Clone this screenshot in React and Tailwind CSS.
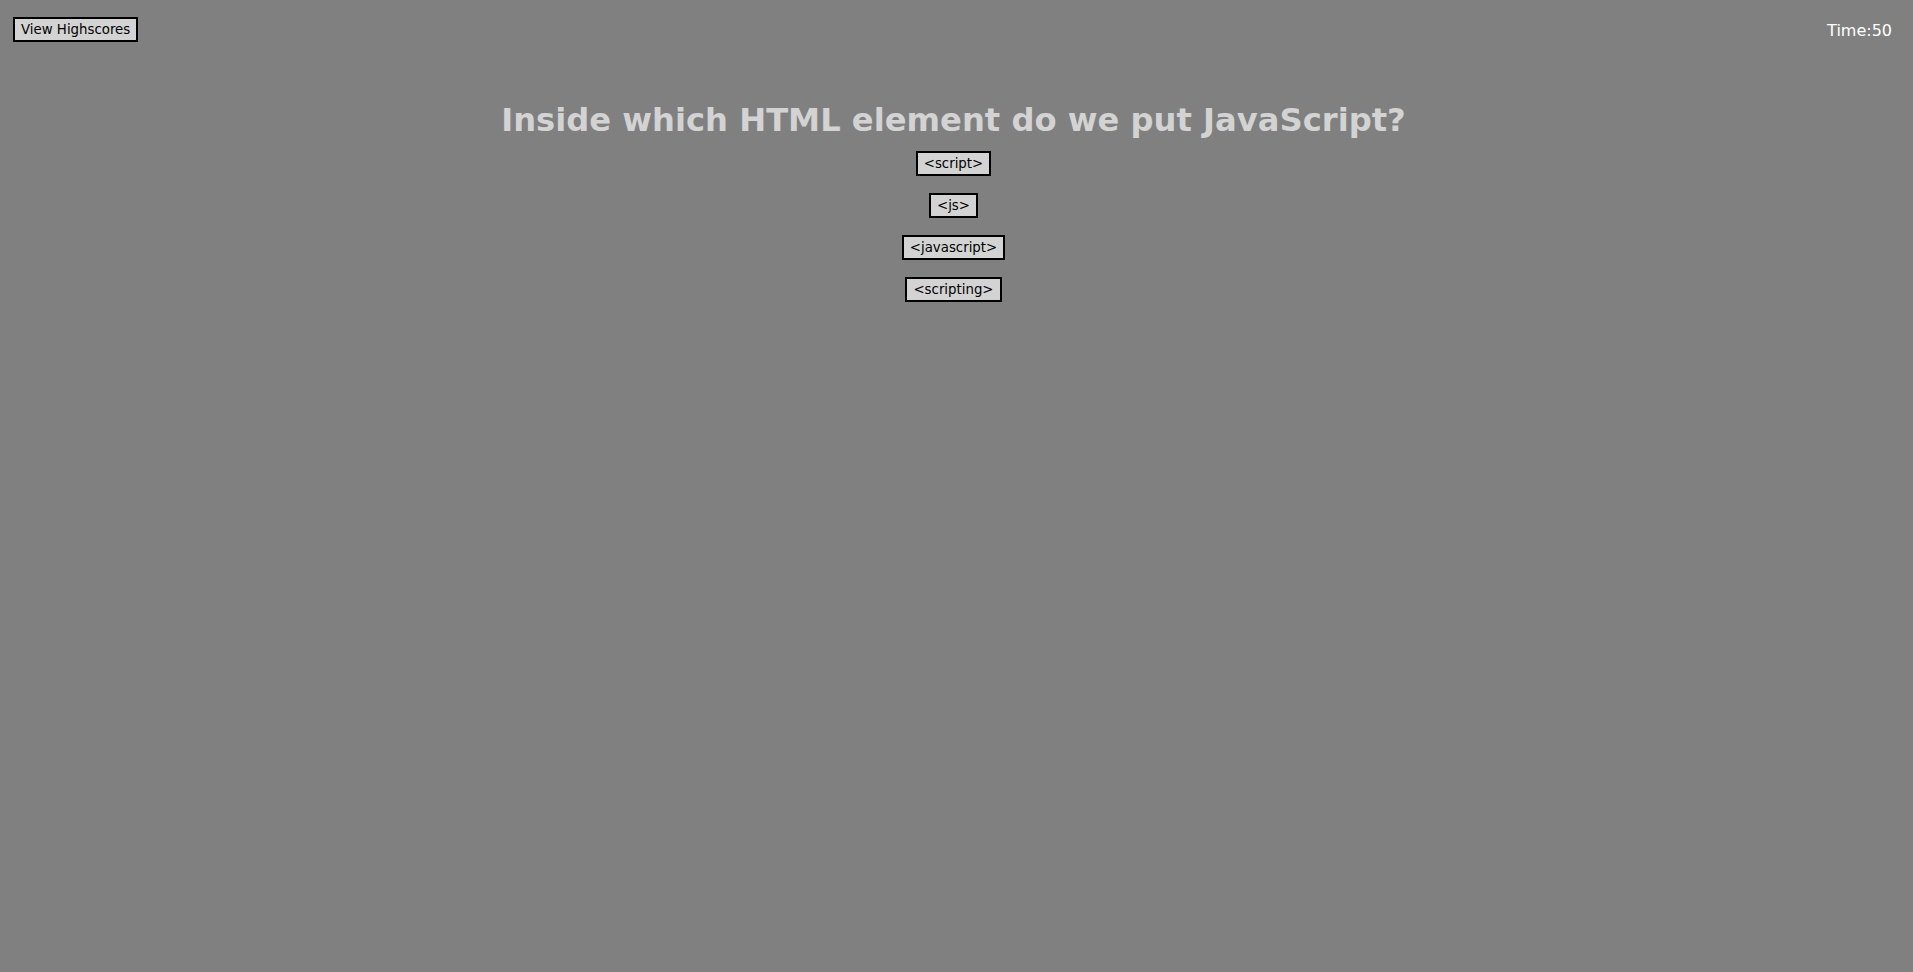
import React from 'react'

const answers = ['<script>', '<js>', '<javascript>', '<scripting>']

export default function App(){
  return (
    <div className="min-h-screen bg-[#808080] font-['DejaVu_Sans',Verdana,sans-serif]">
      <div className="flex justify-between items-start pt-[17px] pl-[13px] pr-[21px]">
        <button className="border-2 border-black bg-[#d3d3d3] text-black text-[13.33px] leading-[19px] px-[6px] py-px">
          View Highscores
        </button>
        <div className="text-white text-[16px] leading-[19px] pt-[4px]">Time:50</div>
      </div>

      {/* question block, a touch left of centre like the original */}
      <div className="flex flex-col items-center pr-[6px]">
        <h1 className="mt-[60px] text-[32.2px] leading-[37px] font-bold text-[#d3d3d3]">
          Inside which HTML element do we put JavaScript?
        </h1>
        <div className="mt-[12px] flex flex-col items-center gap-[17px]">
          {answers.map(a => (
            <button key={a} className="border-2 border-black bg-[#d3d3d3] text-black text-[13.33px] leading-[19px] px-[6px] py-px">
              {a}
            </button>
          ))}
        </div>
      </div>
    </div>
  )
}
